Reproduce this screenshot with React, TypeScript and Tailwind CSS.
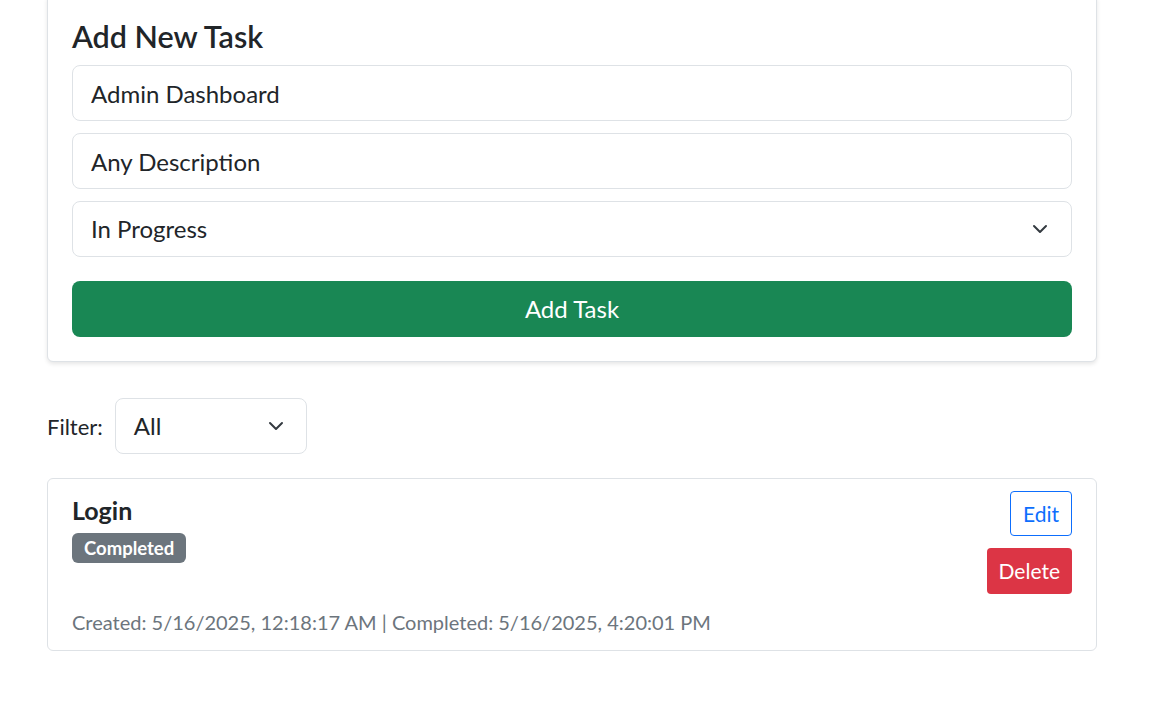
import { useState } from 'react';

const chevron = (
  <svg width="16" height="16" viewBox="0 0 16 16" fill="none" className="shrink-0">
    <path d="m2 5 6 6 6-6" stroke="#343a40" strokeWidth="2" strokeLinecap="round" strokeLinejoin="round" />
  </svg>
);

export default function App() {
  const [title, setTitle] = useState('Admin Dashboard');
  const [desc, setDesc] = useState('Any Description');

  return (
    <div className="min-h-screen bg-white font-['Lato',sans-serif] text-[#212529]">
      <div className="mx-[47px] -mt-[6px] w-[1050px]">
        <div className="rounded-md border border-[#dee2e6] bg-white px-6 pb-6 pt-6 shadow-[0_2px_4px_rgba(0,0,0,0.1)]">
          <h3 className="mb-[12px] text-[30.5px] font-semibold leading-[34px]">Add New Task</h3>
          <div className="flex flex-col gap-3">
            <input
              value={title}
              onChange={(e) => setTitle(e.target.value)}
              className="h-14 w-full rounded-lg border border-[#dee2e6] px-[18px] text-[24px] outline-none"
            />
            <input
              value={desc}
              onChange={(e) => setDesc(e.target.value)}
              className="h-14 w-full rounded-lg border border-[#dee2e6] px-[18px] text-[24px] outline-none"
            />
            <div className="flex h-14 w-full items-center justify-between rounded-lg border border-[#dee2e6] pl-[18px] pr-[23px] text-[24px]">
              <span>In Progress</span>
              {chevron}
            </div>
          </div>
          <button className="mt-6 h-14 w-full rounded-lg bg-[#198754] text-[24px] text-white">Add Task</button>
        </div>

        <div className="mt-[36px] flex items-center gap-3">
          <span className="text-[22px]">Filter:</span>
          <div className="flex h-14 w-[192px] items-center justify-between rounded-lg border border-[#dee2e6] pl-[18px] pr-[22px] text-[24px]">
            <span>All</span>
            {chevron}
          </div>
        </div>

        <div className="mt-6 rounded-md border border-[#dee2e6] px-6 pb-[13px] pt-3">
          <div className="flex items-start justify-between">
            <div className="pt-[4px]">
              <h5 className="text-[25px] font-bold leading-[30px]">Login</h5>
              <span className="mt-[8px] inline-block rounded-md bg-[#6c757d] px-[12px] py-[4px] text-[18.5px] font-bold leading-[22px] text-white">
                Completed
              </span>
            </div>
            <div className="flex flex-col items-end gap-3">
              <button className="h-[45px] rounded border border-[#0d6efd] px-[12px] text-[21px] text-[#0d6efd]">Edit</button>
              <button className="h-[46px] rounded bg-[#dc3545] px-[12px] text-[21px] text-white">Delete</button>
            </div>
          </div>
          <p className="mt-[13px] text-[20px] leading-[30px] text-[#6c757d]">
            Created: 5/16/2025, 12:18:17 AM | Completed: 5/16/2025, 4:20:01 PM
          </p>
        </div>
      </div>
    </div>
  );
}
